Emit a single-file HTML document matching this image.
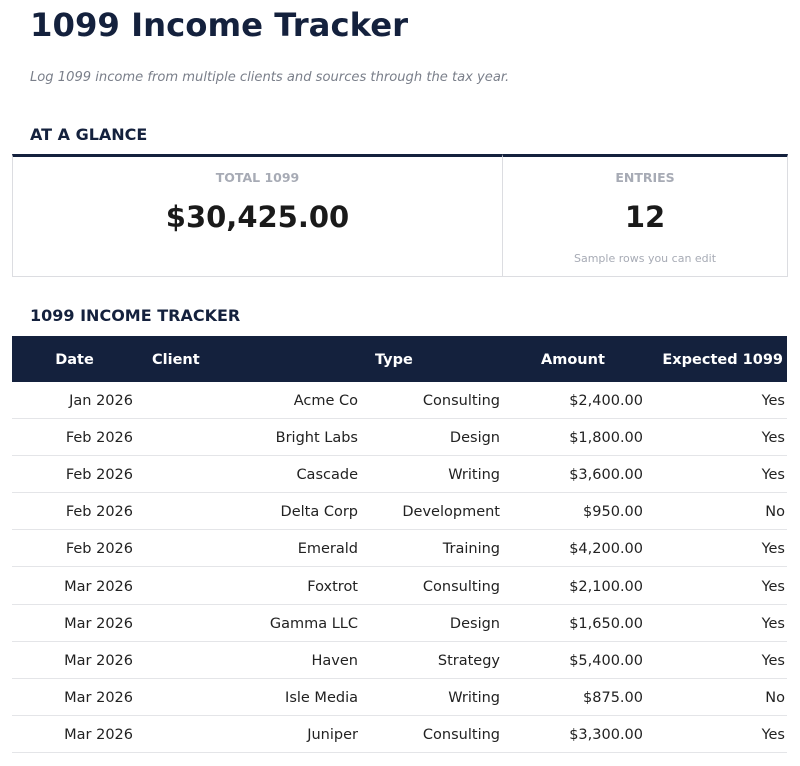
<!DOCTYPE html>
<html><head><style>
body{margin:0;background:#fff;font-family:"DejaVu Sans","Liberation Sans",sans-serif;color:#1f1f1f;width:800px;height:766px;overflow:hidden;position:relative}
.a{position:absolute;white-space:nowrap}
h1{position:absolute;left:30px;top:6px;margin:0;font-size:32.3px;font-weight:bold;color:#14213d}
.sub{left:30px;top:70px;font-size:13.1px;font-style:italic;color:#7a7f8a}
.sec{left:30px;font-size:16px;font-weight:bold;color:#14213d}
.card{position:absolute;top:154px;height:119px;border:1px solid #dcdde1;border-top:3px solid #14213d;text-align:center}
.lab{font-size:12.5px;font-weight:bold;color:#a7abb5;margin-top:13px}
.val{font-size:29px;font-weight:bold;color:#1a1a1a;margin-top:15px}
.note{font-size:11px;color:#a7abb5;margin-top:18px}
table{position:absolute;left:12px;top:336px;width:775px;border-collapse:collapse;table-layout:fixed;font-size:14.5px}
th{background:#14213d;color:#fff;height:44px;font-weight:bold;padding:2px 0 0 0}
td{height:34.1px;border-bottom:1px solid #e4e5e8;text-align:right;padding:2px 12px 0 0;color:#222}
</style></head><body>
<h1>1099 Income Tracker</h1>
<div class="a sub">Log 1099 income from multiple clients and sources through the tax year.</div>
<div class="a sec" style="top:125px">AT A GLANCE</div>
<div class="card" style="left:12px;width:489px"><div class="lab">TOTAL 1099</div><div class="val">$30,425.00</div></div>
<div class="card" style="left:502px;width:284px"><div class="lab">ENTRIES</div><div class="val">12</div><div class="note">Sample rows you can edit</div></div>
<div class="a sec" style="top:306px">1099 INCOME TRACKER</div>
<table>
<colgroup><col style="width:133px"><col style="width:225px"><col style="width:142px"><col style="width:143px"><col style="width:132px"></colgroup>
<tr><th style="text-align:center;padding-right:8px">Date</th><th style="text-align:left;padding-left:7px">Client</th><th style="text-align:left;padding-left:5px">Type</th><th style="text-align:left;padding-left:29px">Amount</th><th style="text-align:right;padding-right:4px">Expected 1099</th></tr>
<tr><td>Jan 2026</td><td>Acme Co</td><td>Consulting</td><td>$2,400.00</td><td style="padding-right:2px">Yes</td></tr>
<tr><td>Feb 2026</td><td>Bright Labs</td><td>Design</td><td>$1,800.00</td><td style="padding-right:2px">Yes</td></tr>
<tr><td>Feb 2026</td><td>Cascade</td><td>Writing</td><td>$3,600.00</td><td style="padding-right:2px">Yes</td></tr>
<tr><td>Feb 2026</td><td>Delta Corp</td><td>Development</td><td>$950.00</td><td style="padding-right:2px">No</td></tr>
<tr><td>Feb 2026</td><td>Emerald</td><td>Training</td><td>$4,200.00</td><td style="padding-right:2px">Yes</td></tr>
<tr><td>Mar 2026</td><td>Foxtrot</td><td>Consulting</td><td>$2,100.00</td><td style="padding-right:2px">Yes</td></tr>
<tr><td>Mar 2026</td><td>Gamma LLC</td><td>Design</td><td>$1,650.00</td><td style="padding-right:2px">Yes</td></tr>
<tr><td>Mar 2026</td><td>Haven</td><td>Strategy</td><td>$5,400.00</td><td style="padding-right:2px">Yes</td></tr>
<tr><td>Mar 2026</td><td>Isle Media</td><td>Writing</td><td>$875.00</td><td style="padding-right:2px">No</td></tr>
<tr><td>Mar 2026</td><td>Juniper</td><td>Consulting</td><td>$3,300.00</td><td style="padding-right:2px">Yes</td></tr>
</table>
</body></html>
